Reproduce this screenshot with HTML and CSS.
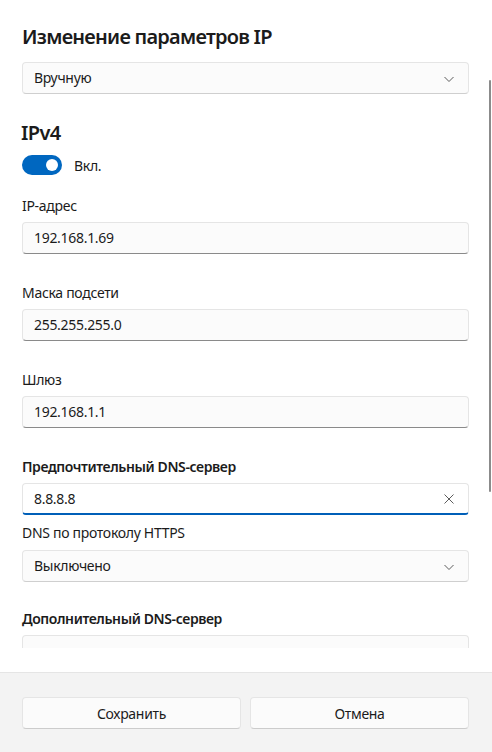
FILE: index.html
```html
<!doctype html>
<html lang="ru">
    <head>
        <title>Изменение параметров IP</title>
        <link rel="stylesheet" href="styles.css">
    </head>
    <body>
        <div id="finestra">
            <div id="contenuto">
                <div id="titolo">Изменение параметров IP</div>
                <div class="tendina" id="modo">
                    <span>Вручную</span>
                    <svg class="freccia" width="12" height="12" viewBox="0 0 12 12"><path d="M1.5 4 L6 8.5 L10.5 4" fill="none" stroke="#5c5c5c" stroke-width="1"/></svg>
                </div>
                <div id="sezione">IPv4</div>
                <div id="interruttore">
                    <div class="pista"><div class="pomello"></div></div>
                    <span>Вкл.</span>
                </div>
                <div class="etichetta" id="primo">IP-адрес</div>
                <div class="campo">192.168.1.69</div>
                <div class="etichetta">Маска подсети</div>
                <div class="campo">255.255.255.0</div>
                <div class="etichetta">Шлюз</div>
                <div class="campo">192.168.1.1</div>
                <div class="etichetta forte">Предпочтительный DNS-сервер</div>
                <div class="campo attivo">
                    <span>8.8.8.8</span>
                    <svg width="12" height="12" viewBox="0 0 12 12"><path d="M1.5 1.5 L10.5 10.5 M10.5 1.5 L1.5 10.5" fill="none" stroke="#5c5c5c" stroke-width="1"/></svg>
                </div>
                <div class="etichetta vicina">DNS по протоколу HTTPS</div>
                <div class="tendina" id="https">
                    <span>Выключено</span>
                    <svg class="freccia" width="12" height="12" viewBox="0 0 12 12"><path d="M1.5 4 L6 8.5 L10.5 4" fill="none" stroke="#5c5c5c" stroke-width="1"/></svg>
                </div>
                <div class="etichetta forte">Дополнительный DNS-сервер</div>
                <div class="campo"></div>
                <div id="barra"></div>
            </div>
            <div id="piede">
                <div class="bottone">Сохранить</div>
                <div class="bottone">Отмена</div>
            </div>
        </div>
    </body>
</html>
```

FILE: styles.css
```css
body{
    margin: 0;
    background: #ffffff;
    font-family: "Noto Sans", "Open Sans", sans-serif;
    font-size: 14px;
    letter-spacing: -0.3px;
    color: #1b1b1b;
    overflow: hidden;
}
#finestra{
    width: 492px;
    height: 752px;
    display: flex;
    flex-direction: column;
}
#contenuto{
    height: 648px;
    margin-bottom: 24px;
    padding: 23px 23px 0 22px;
    box-sizing: border-box;
    overflow: hidden;
    position: relative;
}
#titolo{
    font-size: 20px;
    line-height: 28px;
    font-weight: 600;
    letter-spacing: -0.75px;
    margin-bottom: 11px;
}
#sezione{
    font-size: 20px;
    line-height: 28px;
    font-weight: 600;
    letter-spacing: -0.6px;
    margin-left: -1px;
    margin-top: 25px;
    margin-bottom: 8px;
}
.tendina, .campo{
    height: 32px;
    box-sizing: border-box;
    border: solid 1px #e5e5e5;
    border-bottom-color: #cfcfcf;
    border-radius: 4px;
    background: #fbfbfb;
    padding: 0 13px 0 11px;
    display: flex;
    align-items: center;
    justify-content: space-between;
    line-height: 20px;
}
.campo{
    border-bottom-color: #8a8a8a;
}
.campo.attivo{
    background: #ffffff;
    border-bottom: solid 2px #005fb8;
    padding-top: 1px;
}
.freccia{
    margin-top: 1px;
}
#interruttore{
    display: flex;
    align-items: center;
    gap: 12px;
    height: 20px;
}
.pista{
    width: 40px;
    height: 20px;
    border-radius: 10px;
    background: #0067c0;
    display: flex;
    align-items: center;
    justify-content: flex-end;
    padding-right: 4px;
    box-sizing: border-box;
}
.pomello{
    width: 12px;
    height: 12px;
    border-radius: 50%;
    background: #ffffff;
}
.etichetta{
    line-height: 20px;
    margin-top: 29px;
    margin-bottom: 6px;
}
#primo{
    margin-top: 21px;
}
.forte{
    font-weight: 600;
    letter-spacing: -0.4px;
}
.etichetta.vicina{
    margin-top: 8px;
    margin-bottom: 7px;
}
#https + .etichetta{
    margin-top: 27px;
}
#barra{
    position: absolute;
    right: 1px;
    top: 80px;
    width: 2px;
    height: 412px;
    border-radius: 1px;
    background: #8b8b8b;
}
#piede{
    flex: 1;
    background: #f3f3f3;
    border-top: solid 1px #e5e5e5;
    padding: 24px 23px 0 22px;
    display: flex;
    gap: 9px;
}
.bottone{
    flex: 1;
    height: 32px;
    box-sizing: border-box;
    border: solid 1px #e5e5e5;
    border-bottom-color: #cccccc;
    border-radius: 4px;
    background: #fbfbfb;
    display: flex;
    align-items: center;
    justify-content: center;
}
```
